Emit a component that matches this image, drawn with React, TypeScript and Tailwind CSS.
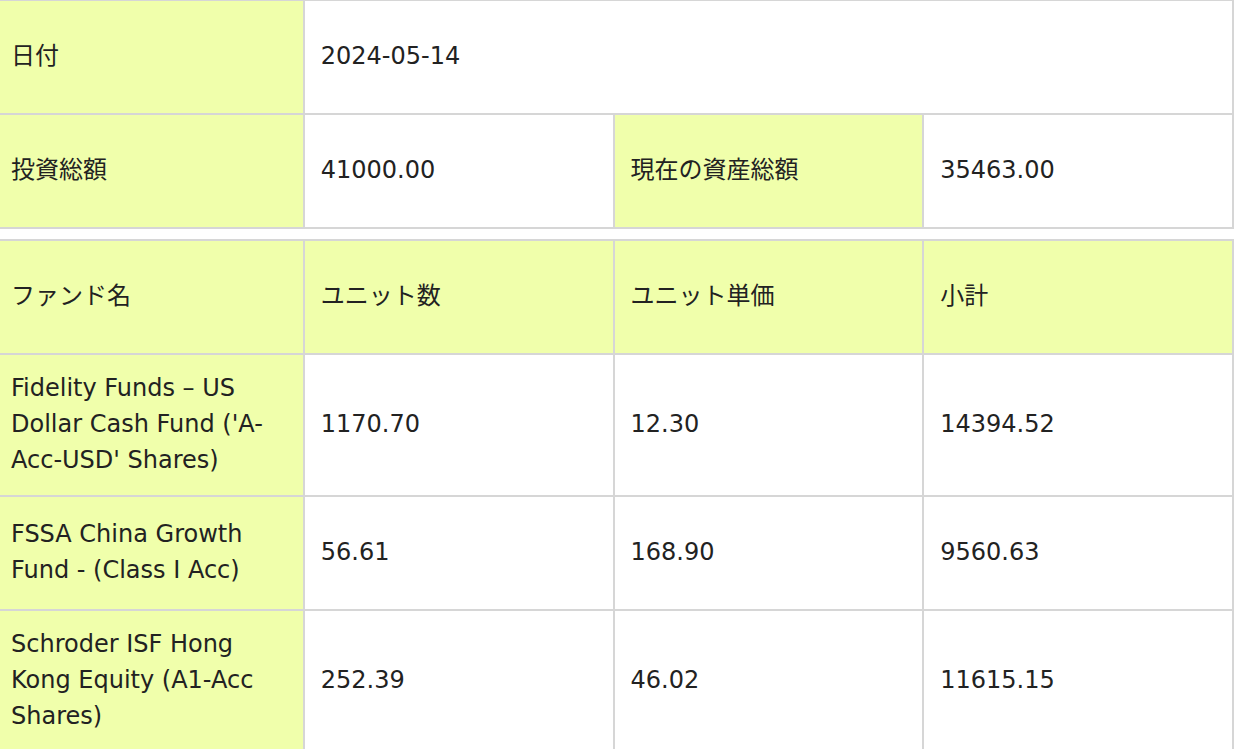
const FUNDS = [
  { name: "Fidelity Funds – US Dollar Cash Fund ('A-Acc-USD' Shares)", units: '1170.70', price: '12.30', subtotal: '14394.52' },
  { name: 'FSSA China Growth Fund - (Class I Acc)', units: '56.61', price: '168.90', subtotal: '9560.63' },
  { name: 'Schroder ISF Hong Kong Equity (A1-Acc Shares)', units: '252.39', price: '46.02', subtotal: '11615.15' },
];

const cell = 'border-2 border-[#d6d6d6] h-[114px] pl-[16px] pr-[14px] pt-[15px] pb-[17px] align-middle text-left font-normal';
const head = `${cell} bg-[#f0ffab]`;

export default function App() {
  return (
    <div
      className="bg-white text-[#222] text-[24px] leading-[36px] overflow-hidden h-[749px]"
      style={{ fontFamily: '"DejaVu Sans", "Noto Sans CJK JP", sans-serif' }}
    >
      <table className="table-fixed border-collapse w-[1241px] -ml-[7px] -mt-px">
        <tbody>
          <tr>
            <th className={head}>日付</th>
            <td className={cell} colSpan={3}>2024-05-14</td>
          </tr>
          <tr>
            <th className={head}>投資総額</th>
            <td className={cell}>41000.00</td>
            <th className={head}>現在の資産総額</th>
            <td className={cell}>35463.00</td>
          </tr>
        </tbody>
      </table>

      <table className="table-fixed border-collapse w-[1241px] -ml-[7px] mt-[10px]">
        <thead>
          <tr>
            <th className={head}>ファンド名</th>
            <th className={head}>ユニット数</th>
            <th className={head}>ユニット単価</th>
            <th className={head}>小計</th>
          </tr>
        </thead>
        <tbody>
          {FUNDS.map(f => (
            <tr key={f.name}>
              <td className={`${cell} bg-[#f0ffab]`}>{f.name}</td>
              <td className={cell}>{f.units}</td>
              <td className={cell}>{f.price}</td>
              <td className={cell}>{f.subtotal}</td>
            </tr>
          ))}
        </tbody>
      </table>
    </div>
  );
}
